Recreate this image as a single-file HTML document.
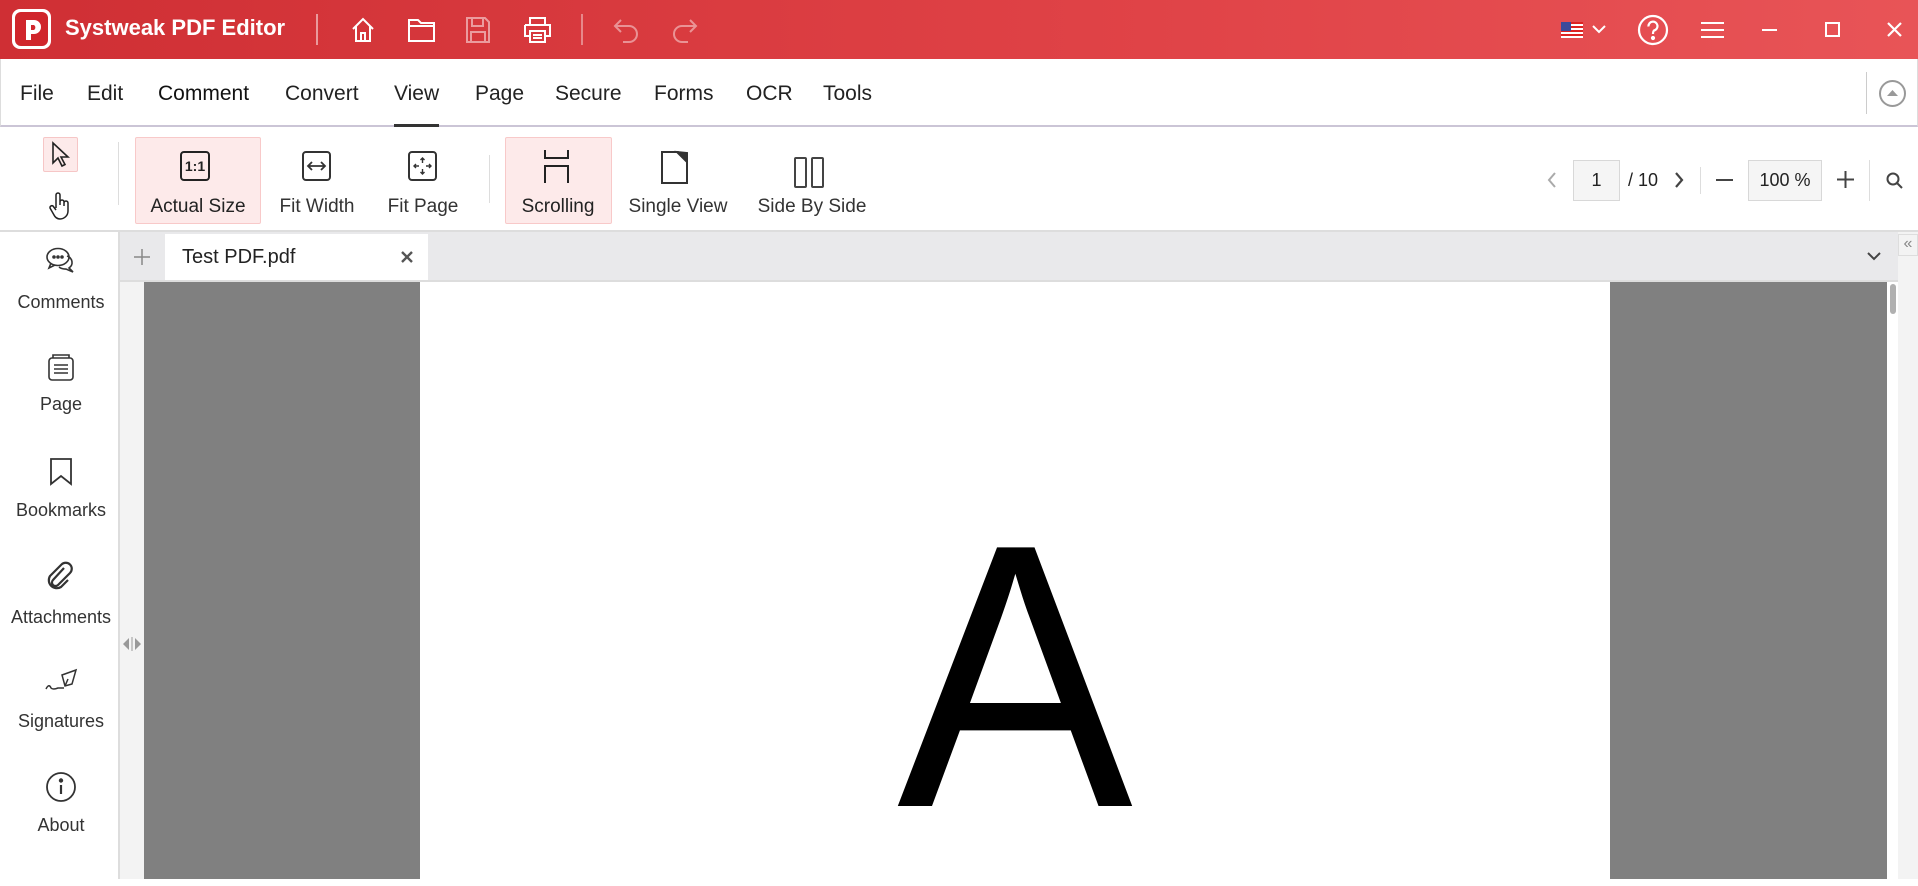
<!DOCTYPE html>
<html><head><meta charset="utf-8"><style>
*{margin:0;padding:0;box-sizing:border-box}
body{width:1918px;height:879px;overflow:hidden;background:#fff;font-family:"Liberation Sans",sans-serif;color:#222;position:relative}
.a{position:absolute}
.t{position:absolute;white-space:nowrap}
svg{position:absolute;overflow:visible}
.menu{font-size:21px;color:#222;top:82px}
.lbl{font-size:19px;color:#333;top:196px;transform:translateX(-50%)}
.side{font-size:18px;color:#333;transform:translateX(-50%);left:61px}
</style></head><body>
<!-- title bar -->
<div class="a" style="left:0;top:0;width:1918px;height:59px;background:linear-gradient(90deg,#cf2f34,#e04347 60%,#e85457)"></div>
<div class="a" style="left:12px;top:9px;width:39px;height:40px;border-radius:8px;background:#fff"></div>
<div class="a" style="left:15px;top:12px;width:33px;height:34px;border-radius:6px;background:#d0262c"></div>
<svg style="left:15px;top:12px" width="33" height="34"><path d="M11 8 h8 a7 7 0 0 1 0 14 h-3 v6 h-5z" fill="#fff"/><path d="M16 13 h3 a3 3 0 0 1 0 5 h-3z" fill="#d0262c"/></svg>
<div class="t" style="left:65px;top:15px;font-size:22px;font-weight:bold;color:#fff">Systweak PDF Editor</div>
<div class="a" style="left:316px;top:14px;width:2px;height:31px;background:rgba(255,255,255,.5)"></div>
<div class="a" style="left:581px;top:14px;width:2px;height:31px;background:rgba(255,255,255,.4)"></div>
<svg style="left:351px;top:17px" width="24" height="26" fill="none" stroke="#fff" stroke-width="2"><path d="M2 12 L12 2 L22 12 M5 9 V24 H19 V9 M10 24 V16 H14 V24"/></svg>
<svg style="left:408px;top:18px" width="27" height="24" fill="none" stroke="#fff" stroke-width="2"><path d="M1 2 H10 L13 5 H26 V23 H1Z M1 8 H26"/></svg>
<svg style="left:466px;top:17px" width="24" height="26" fill="none" stroke="rgba(255,255,255,.5)" stroke-width="2"><path d="M1 1 H19 L23 5 V25 H1Z M6 1 V9 H17 V1 M5 25 V15 H19 V25"/></svg>
<svg style="left:524px;top:17px" width="27" height="26" fill="none" stroke="#fff" stroke-width="2"><path d="M6 8 V1 H21 V8 M1 8 H26 V19 H21 M6 19 H1 V8 M6 14 H21 V25 H6Z M9 18H18 M9 21H18"/></svg>
<svg style="left:613px;top:18px" width="26" height="24" fill="none" stroke="rgba(255,255,255,.45)" stroke-width="2"><path d="M8 2 L2 8 L8 14 M2 8 H16 A8 8 0 0 1 16 24 H10"/></svg>
<svg style="left:672px;top:18px" width="26" height="24" fill="none" stroke="rgba(255,255,255,.45)" stroke-width="2"><path d="M18 2 L24 8 L18 14 M24 8 H10 A8 8 0 0 0 10 24 H16"/></svg>
<!-- flag -->
<svg style="left:1561px;top:22px" width="22" height="16"><rect width="22" height="16" fill="#fff"/><g fill="#d22"><rect y="0" width="22" height="2"/><rect y="4" width="22" height="2"/><rect y="8" width="22" height="2"/><rect y="12" width="22" height="2"/></g><rect width="10" height="9" fill="#3a4a9a"/></svg>
<svg style="left:1592px;top:25px" width="14" height="9" fill="none" stroke="#fff" stroke-width="2"><path d="M1 1 L7 7 L13 1"/></svg>
<svg style="left:1638px;top:15px" width="30" height="30" fill="none" stroke="#fff" stroke-width="2.2"><circle cx="15" cy="15" r="14"/><path d="M10.5 11.5 A4.5 4.5 0 1 1 16 15.5 Q15 16.5 15 19"/><circle cx="15" cy="23" r="1" fill="#fff"/></svg>
<svg style="left:1701px;top:22px" width="23" height="16" stroke="#fff" stroke-width="2"><path d="M0 1H23 M0 8H23 M0 15H23"/></svg>
<div class="a" style="left:1762px;top:29px;width:15px;height:2px;background:#fff"></div>
<div class="a" style="left:1825px;top:22px;width:15px;height:15px;border:2px solid #fff"></div>
<svg style="left:1887px;top:22px" width="15" height="15" stroke="#fff" stroke-width="2.2"><path d="M1 1L14 14M14 1L1 14"/></svg>
<!-- menu bar -->
<div class="a" style="left:0;top:59px;width:1918px;height:68px;border-bottom:2px solid #cbc5d6;border-left:1px solid #ddd;border-right:1px solid #ddd"></div>
<div class="t menu" style="left:20px">File</div>
<div class="t menu" style="left:87px">Edit</div>
<div class="t menu" style="left:158px;color:#111">Comment</div>
<div class="t menu" style="left:285px">Convert</div>
<div class="t menu" style="left:394px">View</div>
<div class="a" style="left:394px;top:124px;width:45px;height:3px;background:#333"></div>
<div class="t menu" style="left:475px">Page</div>
<div class="t menu" style="left:555px">Secure</div>
<div class="t menu" style="left:654px">Forms</div>
<div class="t menu" style="left:746px">OCR</div>
<div class="t menu" style="left:823px">Tools</div>
<div class="a" style="left:1866px;top:72px;width:1px;height:42px;background:#ccc"></div>
<svg style="left:1879px;top:80px" width="27" height="27" fill="none" stroke="#999" stroke-width="2"><circle cx="13.5" cy="13.5" r="12.5"/><path d="M8 16 L13.5 10 L19 16Z" fill="#999" stroke="none"/></svg>
<!-- toolbar -->
<div class="a" style="left:0;top:127px;width:1918px;height:105px;border-bottom:2px solid #ddd"></div>
<div class="a" style="left:43px;top:137px;width:35px;height:35px;background:#fdeaea;border:1px solid #f6c6c6;border-radius:2px"></div>
<svg style="left:51px;top:142px" width="20" height="26" fill="none" stroke="#222" stroke-width="1.6"><path d="M2 1 L2 21 L7 16 L11 24 L14 22.5 L10 15 L17 15Z"/></svg>
<svg style="left:49px;top:192px" width="22" height="28" fill="none" stroke="#222" stroke-width="1.5"><path d="M7 16 V3 a2 2 0 0 1 4 0 V13 M11 10 a2 2 0 0 1 4 0 V14 M15 11 a2 2 0 0 1 4 0 V19 a8 8 0 0 1 -8 8 a7 7 0 0 1 -6 -4 L1 16 a2 2 0 0 1 3 -2 L7 18"/></svg>
<div class="a" style="left:118px;top:142px;width:1px;height:63px;background:#ddd"></div>
<div class="a" style="left:135px;top:137px;width:126px;height:87px;background:#fdeaea;border:1px solid #f8c9c9;border-radius:2px"></div>
<div class="a" style="left:180px;top:151px;width:30px;height:30px;border:2px solid #222;border-radius:4px;font-size:14px;font-weight:bold;text-align:center;line-height:26px">1:1</div>
<div class="t lbl" style="left:198px;color:#222">Actual Size</div>
<div class="a" style="left:302px;top:151px;width:29px;height:30px;border:2px solid #333;border-radius:4px"></div>
<svg style="left:307px;top:160px" width="19" height="12" fill="none" stroke="#333" stroke-width="1.8"><path d="M1 6H18 M5 2L1 6L5 10 M14 2L18 6L14 10"/></svg>
<div class="t lbl" style="left:317px">Fit Width</div>
<div class="a" style="left:408px;top:151px;width:29px;height:30px;border:2px solid #333;border-radius:4px"></div>
<svg style="left:413px;top:156px" width="19" height="20" fill="none" stroke="#333" stroke-width="1.4"><path d="M9.5 2V7 M7.5 4L9.5 2L11.5 4 M9.5 18V13 M7.5 16L9.5 18L11.5 16 M1 10H6 M3 8L1 10L3 12 M18 10H13 M16 8L18 10L16 12"/></svg>
<div class="t lbl" style="left:423px">Fit Page</div>
<div class="a" style="left:489px;top:155px;width:1px;height:48px;background:#ddd"></div>
<div class="a" style="left:505px;top:137px;width:107px;height:87px;background:#fdeaea;border:1px solid #f8c9c9;border-radius:2px"></div>
<svg style="left:542px;top:150px" width="29" height="33" fill="none" stroke="#222" stroke-width="2"><path d="M3 0V8H26V0 M3 33V16H26V33"/></svg>
<div class="t lbl" style="left:558px;color:#222">Scrolling</div>
<svg style="left:661px;top:151px" width="27" height="33" fill="none" stroke="#333" stroke-width="2"><path d="M1 1H17L26 10V32H1Z"/><path d="M16 1L26 11V2Z" fill="#333"/></svg>
<div class="t lbl" style="left:678px">Single View</div>
<div class="a" style="left:794px;top:157px;width:13px;height:31px;border:2px solid #444;border-radius:2px"></div>
<div class="a" style="left:811px;top:157px;width:13px;height:31px;border:2px solid #444;border-radius:2px"></div>
<div class="t lbl" style="left:812px">Side By Side</div>
<!-- right nav -->
<svg style="left:1547px;top:172px" width="10" height="16" fill="none" stroke="#aaa" stroke-width="2"><path d="M8 1L2 8L8 15"/></svg>
<div class="a" style="left:1573px;top:160px;width:47px;height:41px;background:#f5f5f5;border:1px solid #d8d8d8;font-size:18px;text-align:center;line-height:39px">1</div>
<div class="t" style="left:1628px;top:170px;font-size:18px">/ 10</div>
<svg style="left:1674px;top:172px" width="10" height="16" fill="none" stroke="#444" stroke-width="2.2"><path d="M2 1L8 8L2 15"/></svg>
<div class="a" style="left:1700px;top:167px;width:1px;height:27px;background:#ddd"></div>
<div class="a" style="left:1716px;top:179px;width:17px;height:2px;background:#444"></div>
<div class="a" style="left:1748px;top:160px;width:74px;height:41px;background:#f5f5f5;border:1px solid #d8d8d8;font-size:18px;text-align:center;line-height:39px">100 %</div>
<svg style="left:1837px;top:171px" width="17" height="17" stroke="#444" stroke-width="2"><path d="M8.5 0V17M0 8.5H17"/></svg>
<div class="a" style="left:1869px;top:160px;width:1px;height:41px;background:#ddd"></div>
<svg style="left:1886px;top:172px" width="17" height="17" fill="none" stroke="#444" stroke-width="2"><circle cx="7" cy="7" r="5.5"/><path d="M11 11L16 16"/></svg>
<!-- sidebar -->
<div class="a" style="left:118px;top:232px;width:2px;height:647px;background:#ddd"></div>
<svg style="left:46px;top:247px" width="30" height="28" fill="none" stroke="#333" stroke-width="1.6"><ellipse cx="12" cy="10" rx="11" ry="8.5"/><path d="M5 16L3 21L9 18"/><path d="M21 9 a8 7 0 0 1 2 12 L27 25 L20 22 a9 7 0 0 1 -7 -2"/><circle cx="8" cy="10" r="1" fill="#333"/><circle cx="12" cy="10" r="1" fill="#333"/><circle cx="16" cy="10" r="1" fill="#333"/></svg>
<div class="t side" style="top:292px">Comments</div>
<svg style="left:48px;top:353px" width="26" height="28" fill="none" stroke="#333" stroke-width="1.6"><rect x="1" y="5" width="24" height="22" rx="3"/><path d="M5 5V2H21V5 M6 12H20 M6 16H20 M6 20H20"/></svg>
<div class="t side" style="top:394px">Page</div>
<svg style="left:50px;top:458px" width="22" height="27" fill="none" stroke="#333" stroke-width="1.8"><path d="M1 1H21V26L11 18L1 26Z"/></svg>
<div class="t side" style="top:500px">Bookmarks</div>
<svg style="left:46px;top:562px" width="30" height="30" fill="none" stroke="#333" stroke-width="2.2"><path d="M18 6 L7 18 a3.5 3.5 0 0 0 5 5 L24 11 a6 6 0 0 0 -8.5 -8.5 L4 14 a8 8 0 0 0 11 11 L22 18"/></svg>
<div class="t side" style="top:607px">Attachments</div>
<svg style="left:44px;top:668px" width="34" height="25" fill="none" stroke="#333" stroke-width="1.5"><path d="M18 7L32 2L28 16L21 18Z M21 18L24 11 M2 21 Q5 15 7 20 Q9 22 14 20 H20"/></svg>
<div class="t side" style="top:711px">Signatures</div>
<svg style="left:46px;top:772px" width="30" height="30" fill="none" stroke="#333" stroke-width="1.8"><circle cx="15" cy="15" r="14"/><path d="M15 13V22" stroke-width="2.2"/><circle cx="15" cy="8.5" r="1.3" fill="#333"/></svg>
<div class="t side" style="top:815px">About</div>
<!-- tab bar -->
<div class="a" style="left:120px;top:232px;width:1778px;height:49px;background:#e9e9eb"></div>
<div class="a" style="left:165px;top:234px;width:263px;height:47px;background:#fff"></div>
<svg style="left:134px;top:249px" width="16" height="16" stroke="#888" stroke-width="1.5"><path d="M8 0V16M0 8H16"/></svg>
<div class="t" style="left:182px;top:246px;font-size:20px;color:#222">Test PDF.pdf</div>
<svg style="left:401px;top:251px" width="12" height="12" stroke="#555" stroke-width="2.4"><path d="M1 1L11 11M11 1L1 11"/></svg>
<svg style="left:1867px;top:252px" width="14" height="8" fill="none" stroke="#444" stroke-width="2"><path d="M1 1L7 7L13 1"/></svg>
<div class="a" style="left:120px;top:280px;width:1778px;height:2px;background:#ddd"></div>
<!-- right strip -->
<div class="a" style="left:1898px;top:232px;width:20px;height:647px;background:#f3f3f3"></div>
<div class="a" style="left:1898px;top:234px;width:20px;height:22px;border:1px solid #ddd;color:#888;font-size:16px;line-height:18px;text-align:center">«</div>
<!-- content -->
<div class="a" style="left:120px;top:282px;width:24px;height:597px;background:#f3f3f3"></div>
<svg style="left:122px;top:637px" width="20" height="14"><path d="M7 1L1 7L7 13Z M13 1L19 7L13 13Z" fill="#999"/><path d="M10 0V14" stroke="#999" stroke-width="1"/></svg>
<div class="a" style="left:144px;top:282px;width:1743px;height:597px;background:#808080"></div>
<div class="a" style="left:420px;top:282px;width:1190px;height:597px;background:#fff"></div>
<div class="a" style="left:1887px;top:282px;width:11px;height:597px;background:#fff"></div>
<div class="a" style="left:1890px;top:284px;width:6px;height:30px;background:#b0b0b0;border-radius:3px"></div>
<div class="t" style="left:1015px;top:488px;transform:translateX(-50%) scaleX(0.94);font-size:376px;line-height:376px;color:#000">A</div>
</body></html>
